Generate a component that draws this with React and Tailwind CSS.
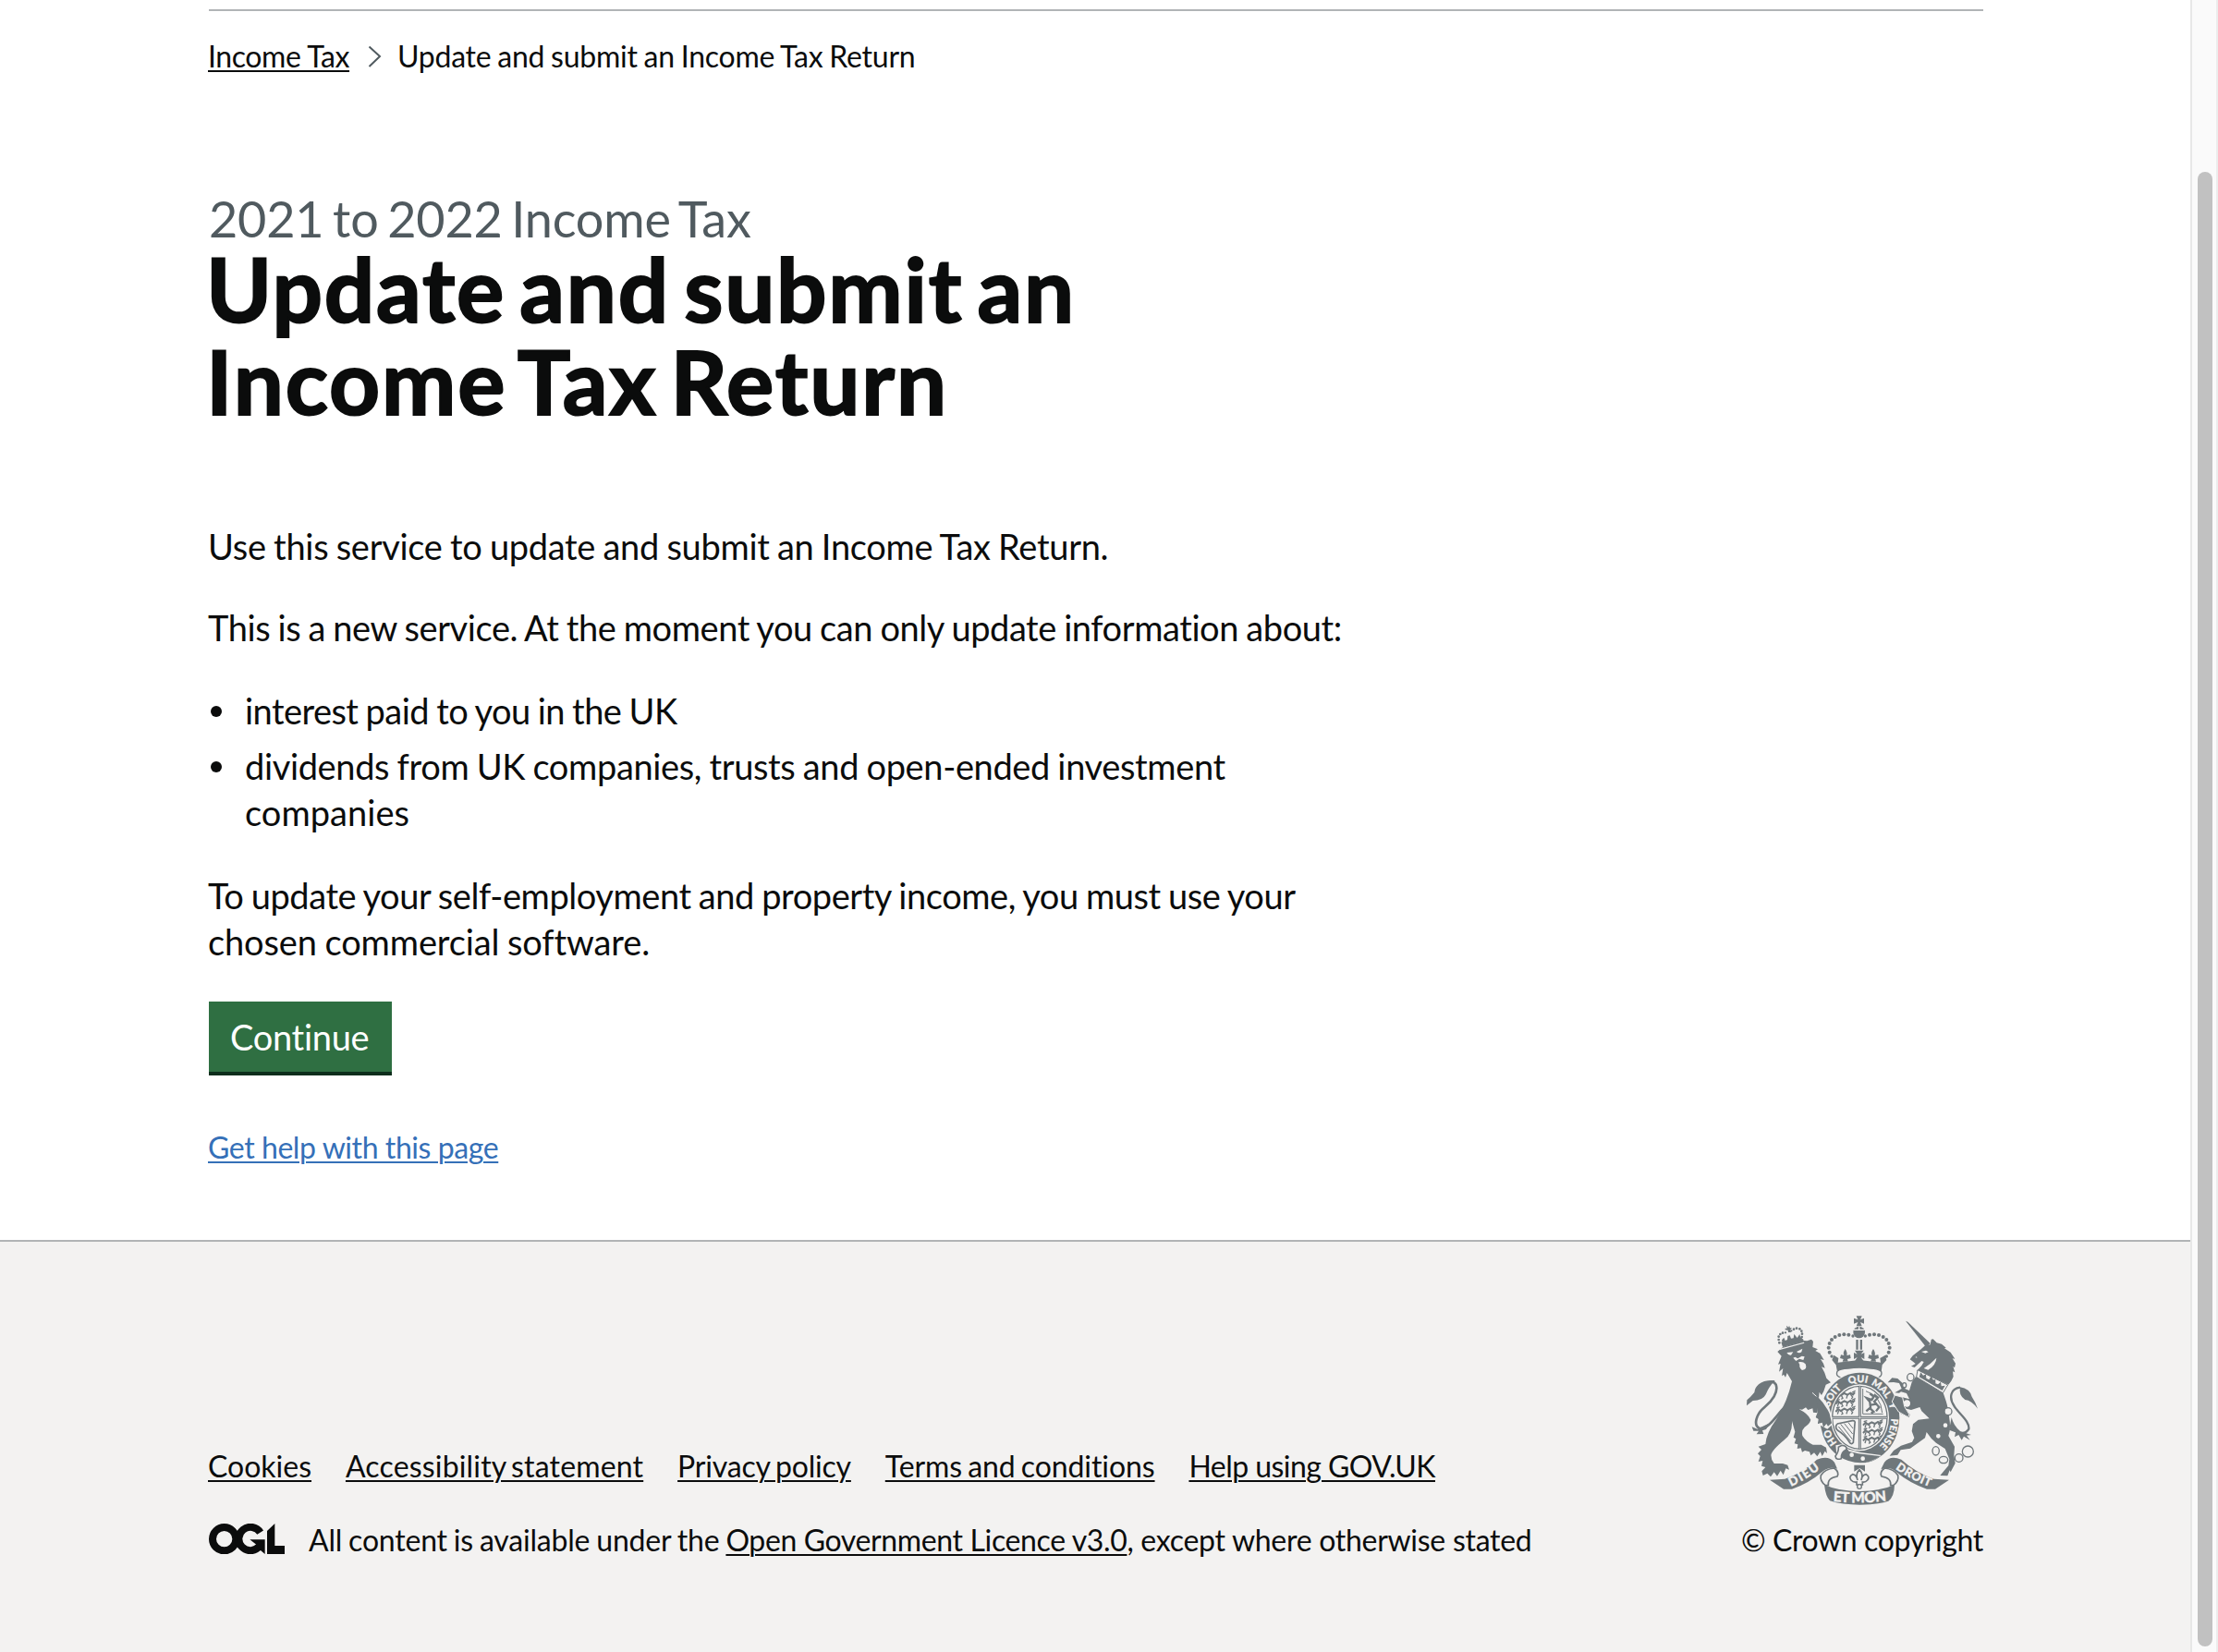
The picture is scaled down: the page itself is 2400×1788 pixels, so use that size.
import React from "react";

const footerLinks = [
  { label: "Cookies", className: "tracking-[0px]" },
  { label: "Accessibility statement", className: "tracking-[0.17px] [word-spacing:-3px]" },
  { label: "Privacy policy", className: "tracking-[-0.2px] [word-spacing:-2px]" },
  { label: "Terms and conditions", className: "tracking-[-0.08px] [word-spacing:-2px]" },
  { label: "Help using GOV.UK", className: "tracking-[-0.55px]" },
];

const link = "underline decoration-2 underline-offset-[3px]";

function OglLogo() {
  return (
    <svg className="block h-[33.4px] w-[82px] shrink-0" viewBox="18 25 246 100" role="img" aria-label="Open Government Licence">
      <circle cx="68" cy="75" r="38" fill="none" stroke="#0b0c0c" strokeWidth="24" />
      <path d="M185 54 A38 38 0 1 0 182 99" fill="none" stroke="#0b0c0c" strokeWidth="24" />
      <path d="M151 77 H200 V124 L185 111 L172 116 L164 98 L172 93 Z M207 49 L232 25 V97 H264 V125 H207 Z" fill="#0b0c0c" />
      <path d="M105 57 L114 75 L105 93 Z" fill="#0b0c0c" />
    </svg>
  );
}

const crownDots = [
  [405, 106, 5], [391, 102, 6], [376, 101, 6], [361, 103, 6], [347, 109, 6], [336, 118, 6],
  [329, 130, 6], [326, 144, 6], [329, 159, 6], [336, 172, 5],
];
const smallCrownDots = [
  [166, 128, 4], [164, 118, 4], [164, 108, 4], [169, 100, 4], [177, 96, 4], [186, 95, 3.5],
  [205, 89, 3.5], [213, 84, 4], [222, 81, 4], [232, 83, 4], [238, 90, 4], [240, 99, 4], [239, 109, 4],
];
const charges = [
  [347, 288], [347, 313], [347, 338], [436, 382], [436, 407], [436, 432],
];

function RoyalArms() {
  const g = "#6f777b";
  const bg = "#f3f2f1";
  return (
    <svg className="block h-[206.7px] w-[250px]" viewBox="60 40 750 620" role="img" aria-label="Royal coat of arms">
      <defs>
        <path id="garter" d="M427 488 A102 116 0 0 1 427 256 A102 116 0 0 1 427 488" />
        <path id="dieu" d="M196 598 Q250 575 305 532" />
        <path id="droit" d="M536 532 Q590 572 662 598" />
        <path id="mon" d="M330 642 Q427 652 524 640" />
        <clipPath id="field"><ellipse cx="427" cy="371" rx="89" ry="102" /></clipPath>
      </defs>

      {/* lion */}
      <g fill={g}>
        <path d="M160 157 L178 141 L246 121 L256 122 L270 117 L276 124 L274 142 L291 149 L283 154 L298 162 L311 184 L300 181 L309 195 L314 210 L303 206 L313 225 L319 243 L333 257 L317 264 L310 285 L300 303 L322 337 L334 370 L333 390 L322 404 L318 391 L309 402 L304 386 L292 391 L292 376 L285 370 L291 356 L276 354 L274 341 L259 346 L252 338 L240 345 L230 344 Q259 358 268 378 Q265 391 248 402 Q237 412 241 430 Q253 449 275 459 L302 459 L318 468 L321 487 L314 480 L305 496 L299 482 L289 497 L279 485 L268 494 L264 482 L249 478 L240 483 L236 470 L224 472 L226 458 L215 455 L220 440 L212 435 L217 417 L207 382 Q209 425 181 444 Q140 478 139 493 Q139 507 149 520 L177 520 L193 525 L198 540 L187 536 L179 557 L170 543 L159 561 L149 548 L138 563 L127 552 L113 559 L109 545 L121 532 L108 528 L112 511 L98 514 L104 496 L96 488 L108 475 L98 465 L121 457 Q124 420 155 378 Q184 332 198 286 L207 253 L191 226 L186 240 L180 231 L174 236 L178 211 L165 222 L170 196 L162 198 L173 171 Z" />
        <path d="M77 401 L95 408 L111 400 L137 387 L123 409 L111 413 L115 424 L92 425 L99 414 L82 414 Z" />
        <path d="M152 250 Q115 248 99 263 Q86 274 85 289 Q73 304 61 314 L60 332 L80 316 Q112 316 122 296 Q131 272 152 250 Z" />
        <path d="M172 126 L236 110 L245 119 L242 124 L177 142 Z" />
        {smallCrownDots.map(([x, y, r], i) => <circle key={i} cx={x} cy={y} r={r} />)}
        <path d="M189 72 L196 78 L198 72 L201 80 L207 80 L202 86 L204 94 L195 94 L194 87 L185 86 L185 81 L191 81 Z" />
        <path d="M176 128 L174 119 L181 111 L185 121 L192 118 L193 106 L200 104 L204 114 L212 113 L214 100 L221 108 L224 112 L232 100 L235 112 L180 126 Z" />
      </g>
      <path d="M190 330 C160 356 134 410 101 406 C80 394 92 358 119 336 C142 317 164 288 155 264 Q148 251 133 256" fill="none" stroke={g} strokeWidth="8" />
      <path d="M190 160 L211 158 L204 168 Q196 170 190 160 Z M222 157 L241 147 L238 158 Q230 164 222 157 Z M228 191 Q242 187 251 197 Q258 215 240 217 Q230 210 232 199 Z M211 177 L217 174 L226 179 L239 171 L248 173 L244 184 L231 180 L220 187 Z M167 147 L246 126 L247 129 L168 151 Z" fill={bg} />
      <path d="M273 290 Q302 312 326 346" fill="none" stroke={bg} strokeWidth="3" />

      {/* unicorn */}
      <g fill={g}>
        <path d="M576 57 L583 60 L656 130 L643 143 Z" />
        <path d="M590 182 L599 170 L626 149 L639 137 L656 134 L659 117 L665 116 L677 128 L693 132 L707 144 L702 146 L722 159 L736 180 L728 179 L738 195 L735 209 L730 204 L736 224 L729 221 L731 238 L724 252 L715 264 L612 219 L628 202 L635 190 L628 187 L614 200 L605 208 L594 204 L608 196 L601 190 Z" />
        <path d="M609 238 L696 286 Q715 334 717 367 Q724 407 715 430 L735 465 L733 493 L737 519 L722 548 L719 542 L712 560 L688 559 L701 543 L715 527 L718 506 L704 472 L675 453 L659 438 L644 418 L639 437 L591 471 L560 476 L550 492 L524 495 L537 478 L561 462 L597 450 L604 437 L596 415 L600 392 L617 378 L653 374 L628 350 L622 337 L594 346 L570 340 L568 330 L590 361 L587 370 L560 358 L545 349 L532 319 L541 301 L566 305 L588 311 L579 292 L561 287 L555 291 L541 290 L563 277 L555 259 L537 256 L518 257 L532 242 L550 244 L566 259 L575 278 L588 283 L596 256 Z" />
        <path d="M810 342 Q802 319 791 303 Q784 277 753 272 Q747 299 769 313 Q790 315 810 342 Z" />
        <path d="M725 370 Q731 397 754 416 L789 427 L774 429 L785 444 L765 432 L758 444 L748 427 L735 434 L738 419 L717 411 Z" />
      </g>
      <path d="M721 398 C732 415 766 434 781 408 C784 382 751 361 734 334 C715 306 722 276 753 273" fill="none" stroke={g} strokeWidth="7" />
      <path d="M615 216 L713 265 L697 291 L611 239 Z" fill={bg} stroke={g} strokeWidth="3" />
      <path d="M620 239 L625 224 L633 234 L642 230 L643 243 L652 248 L659 235 L665 248 L673 248 L673 260 L681 263 L690 255 L692 269 L704 267 L695 283 Z" fill={g} />
      <path d="M627 157 L642 153 L650 158 L640 162 Z M607 175 L612 173 L613 177 Z M635 211 Q656 198 676 177 Q675 200 649 216 Z" fill={bg} />
      <g fill={bg} stroke={g} strokeWidth="4">
        <ellipse cx="592" cy="240" rx="11" ry="12" />
        <ellipse cx="572" cy="266" rx="6" ry="8" />
        <ellipse cx="580" cy="325" rx="13" ry="13" />
        <ellipse cx="714" cy="351" rx="12" ry="12" />
        <ellipse cx="705" cy="396" rx="9" ry="9" />
        <ellipse cx="682" cy="431" rx="9" ry="9" />
        <g fill="none">
          <ellipse cx="674" cy="479" rx="11" ry="14" />
          <ellipse cx="699" cy="508" rx="14" ry="11" />
          <ellipse cx="749" cy="502" rx="13" ry="13" />
          <ellipse cx="778" cy="481" rx="18" ry="18" />
        </g>
      </g>

      {/* crown */}
      <g fill={g}>
        <path d="M416 41 H434 L429 53 L441 48 V66 L429 61 L434 74 H416 L421 61 L408 66 V48 L421 53 Z" />
        <circle cx="425" cy="94" r="19" />
        <path d="M415 118 H422 V150 H415 Z M428 118 H435 V150 H428 Z" />
        {crownDots.map(([x, y, r], i) => (
          <g key={i}><circle cx={x} cy={y} r={r} /><circle cx={850 - x} cy={y} r={r} /></g>
        ))}
        <path d="M411 153 H440 L431 165 L442 160 V181 L431 175 L440 188 H411 L419 175 L408 181 V160 L419 165 Z" />
        <path d="M380 148 Q388 160 385 169 L396 167 L398 178 L387 181 L389 189 H371 L374 181 L363 178 L366 167 L376 169 Q371 160 380 148 Z" />
        <path d="M471 148 Q479 160 476 169 L487 167 L489 178 L478 181 L480 189 H462 L465 181 L454 178 L457 167 L467 169 Q462 160 471 148 Z" />
        <path d="M343 168 L358 178 L356 192 L425 184 L495 192 L493 178 L510 168 L514 184 L500 200 L497 222 Q425 201 354 222 L350 200 L337 184 Z" />
      </g>
      <path d="M407 86 H443 M425 76 V84" fill="none" stroke={bg} strokeWidth="4" />
      <path d="M366 241 Q348 237 354 221 Q362 212 390 211 Q425 206 462 211 Q492 213 497 222 Q501 238 484 241" fill={bg} stroke={g} strokeWidth="4" />

      {/* garter */}
      <ellipse cx="427" cy="372" rx="133" ry="150" fill={bg} />
      <ellipse cx="427" cy="372" rx="129" ry="147" fill={g} />
      <ellipse cx="427" cy="371" rx="95" ry="108" fill={bg} />
      <ellipse cx="427" cy="371" rx="89" ry="102" fill="none" stroke={g} strokeWidth="4" />
      <g fill={bg} stroke={bg} strokeWidth="0.8" fontFamily="Lato, sans-serif" fontWeight="900" fontSize="32" textAnchor="middle">
        <text><textPath href="#garter" startOffset="16%">HO</textPath></text>
        <text><textPath href="#garter" startOffset="35.5%">SOIT</textPath></text>
        <text><textPath href="#garter" startOffset="49.2%">QUI</textPath></text>
        <text><textPath href="#garter" startOffset="60.5%">MAL</textPath></text>
        <text><textPath href="#garter" startOffset="69.5%">Y</textPath></text>
        <text><textPath href="#garter" startOffset="82.5%">PENSE</textPath></text>
      </g>

      {/* quartered field */}
      <g clipPath="url(#field)" fill="none" stroke={g}>
        {charges.map(([x, y], i) => (
          <g key={i} transform={`translate(${x} ${y})`}>
            <path d="M2 14 L10 5 L18 11 L30 4 L40 9 L50 3 L58 8 L64 1" strokeWidth="6" />
            <path d="M12 9 L8 22 M20 10 L25 20 L20 23 M40 9 L37 21 M50 7 L57 16 L53 22 M4 2 L15 -1 M55 1 L66 -4" strokeWidth="4" />
          </g>
        ))}
        <path d="M437 277 V359 H503 M447 285 Q495 300 500 355" strokeWidth="3" />
        <path d="M448 350 L462 338 L460 320 L449 307 L466 313 L476 298 L486 306 L474 319 L490 337 L480 350 M463 330 L483 326 M461 341 L472 352 L464 356 M474 304 L460 293" strokeWidth="7" />
        <path d="M354 391 L403 381 Q414 380 411 391 L406 452 Q399 461 392 448 Q379 427 355 412 Q345 402 354 391" strokeWidth="5" />
        <path d="M365 392 L403 441 M377 390 L404 424 M390 387 L405 406 M358 400 L398 448" strokeWidth="3" />
        <path d="M427 262 V482 M332 371 H522" strokeWidth="9" />
        <path d="M427 262 V482 M332 371 H522" stroke={bg} strokeWidth="2" />
      </g>

      {/* lion's paw over the garter */}
      <path d="M296 288 L326 332 L338 372 L337 394 L322 408 L301 397 L286 376 L290 350 Z" fill={bg} />
      <path d="M286 298 Q316 328 329 358 L336 389 L324 399 L319 391 L309 403 L305 387 L291 391 L293 376 L284 370 L290 354 Z" fill={g} />
      {/* hooves over the garter */}
      <path d="M541 298 L566 305 L572 335 L588 361 L583 369 L553 352 L532 319 Z" fill={g} stroke={bg} strokeWidth="3" />
      {/* buckle and strap */}
      <path d="M349 461 L371 457 L391 474 L430 484 L497 493 Q459 520 427 521 Q389 521 353 501 Z" fill={bg} />
      <path d="M363 464 L382 466 L392 480 L423 488 L493 496 Q462 518 430 518 Q390 517 360 497 L371 484 Z" fill={g} />
      <path d="M369 461 Q386 462 384 474 Q365 483 367 504 Q350 510 348 496 Q359 482 358 467 Z" fill={bg} stroke={g} strokeWidth="5" />
      <circle cx="401" cy="492" r="7" fill={bg} />
      <circle cx="437" cy="504" r="7" fill={bg} />

      {/* fleur */}
      <path d="M409 525 H444 V546 L427 535 L409 546 Z" fill={g} />
      <path d="M426 540 Q440 555 432 574 Q434 557 448 555 Q461 563 452 574 Q445 582 436 580 V589 H417 V580 Q406 582 399 574 Q390 562 404 555 Q417 557 420 574 Q412 555 426 540 Z" fill={bg} stroke={g} strokeWidth="5" />
      <circle cx="426" cy="595" r="7" fill={bg} stroke={g} strokeWidth="4" />

      {/* motto ribbon */}
      <path d="M135 573 L184 570 Q245 549 288 507 Q326 492 345 516 L354 537 Q328 528 308 545 Q260 586 207 603 H180 Z" fill={g} />
      <path d="M717 573 L668 570 Q608 549 562 507 Q526 492 507 516 L496 539 Q523 529 542 545 Q592 586 645 603 H672 Z" fill={g} />
      <g fill={bg} stroke={g} strokeWidth="5">
        <path d="M316 591 Q297 578 301 558 Q314 538 344 535 Q362 548 354 562 Q321 567 325 591 Z" />
        <path d="M536 591 Q555 578 551 558 Q538 538 508 535 Q490 548 498 562 Q531 567 527 591 Z" />
      </g>
      <path d="M312 589 Q358 610 427 610 Q497 609 540 589 Q539 628 520 642 Q482 654 427 654 Q369 654 330 641 Q316 626 312 589 Z" fill={g} />
      <g fill={bg} stroke={bg} strokeWidth="1" fontFamily="Lato, sans-serif" fontWeight="900" textAnchor="middle">
        <text fontSize="40"><textPath href="#dieu" startOffset="50%" textLength="110">DIEU</textPath></text>
        <text fontSize="38"><textPath href="#droit" startOffset="50%" textLength="126">DROIT</textPath></text>
        <text fontSize="46"><textPath href="#mon" startOffset="50%" textLength="174">ET MON</textPath></text>
      </g>
    </svg>
  );
}

export default function App() {
  return (
    <div className="flex h-[1788px] w-[2400px] overflow-hidden bg-white font-['Lato',sans-serif] text-[#0b0c0c] [font-variant-ligatures:none]">
      <div className="flex w-[2370px] flex-col">
        <div className="ml-[226px] w-[1920px] pt-[10px]">
          <div className="h-0.5 bg-[#b1b4b6]" />
          <nav className="mt-[29px] flex h-10 items-center text-[32px] leading-10 whitespace-nowrap">
            <a className={`${link} -ml-px w-[153px] tracking-[-0.42px]`}>Income Tax</a>
            <svg className="ml-5 h-6 w-[15px]" viewBox="0 0 15 24" fill="none">
              <path d="M1.5 1.5 L13 12 L1.5 23" stroke="#505a5f" strokeWidth="2" />
            </svg>
            <span className="ml-[17px] tracking-[-0.26px] [word-spacing:-1px]">Update and submit an Income Tax Return</span>
          </nav>

          <main className="pt-[130px]">
            <h1>
              <span className="block text-[54px] leading-[51px] tracking-[-0.2px] [word-spacing:-4px] text-[#505a5f]">2021 to 2022 Income Tax</span>
              <span className="-ml-[3px] block text-[96px] leading-[100px] font-bold whitespace-nowrap [-webkit-text-stroke:2px_#0b0c0c]">
                <span className="block tracking-[1.8px] [word-spacing:-10px]">Update and submit an</span>
                <span className="block tracking-[1.9px] [word-spacing:-11px]">Income Tax Return</span>
              </span>
            </h1>

            <div className="-ml-px pt-[103.5px] text-[38px] leading-[50px] whitespace-nowrap">
              <p className="tracking-[-0.3px] [word-spacing:-1px]">Use this service to update and submit an Income Tax Return.</p>
              <p className="mt-[38px] tracking-[-0.42px] [word-spacing:-1px]">This is a new service. At the moment you can only update information about:</p>
              <ul className="mt-10">
                <li className="flex tracking-[-0.55px] [word-spacing:-1px]">
                  <span className="mt-[20px] mr-[25px] ml-[3px] size-3 rounded-full bg-[#0b0c0c]" />
                  interest paid to you in the UK
                </li>
                <li className="mt-2.5 flex tracking-[-0.36px] [word-spacing:-1px]">
                  <span className="mt-[20px] mr-[25px] ml-[3px] size-3 rounded-full bg-[#0b0c0c]" />
                  <span>dividends from UK companies, trusts and open-ended investment<br /><span className="tracking-[0.04px]">companies</span></span>
                </li>
              </ul>
              <p className="mt-10 tracking-[-0.44px] [word-spacing:-1px]">
                To update your self-employment and property income, you must use your<br />
                <span className="tracking-[-0.12px]">chosen commercial software.</span>
              </p>
            </div>

            <button className="mt-[40.5px] block h-20 w-[198px] border-b-4 border-[#0d2e1c] bg-[#2f6f42] px-[23px] pt-[13px] pb-[13px] text-left text-[38px] leading-[50px] tracking-[-0.3px] whitespace-nowrap text-white">Continue</button>

            <a className={`${link} mt-[58px] -ml-px block w-fit text-[32px] leading-10 tracking-[-0.42px] text-[#3570b8]`}>Get help with this page</a>
          </main>
        </div>

        <footer className="mt-[80px] h-[446px] shrink-0 border-t-2 border-[#b1b4b6] bg-[#f3f2f1] pl-[225px] text-[32px] leading-10">
          <div className="flex h-[342.6px] w-[1921px] items-end justify-between whitespace-nowrap">
            <div>
              <ul className="flex gap-[36.9px]">
                {footerLinks.map((item) => (
                  <li key={item.label}><a className={`${link} ${item.className}`}>{item.label}</a></li>
                ))}
              </ul>
              <div className="mt-10 flex">
                <div className="mt-0.5 mr-[26px] ml-px"><OglLogo /></div>
                <p>
                  <span className="tracking-[-0.2px] [word-spacing:-1px]">All content is available under the </span>
                  <a className={`${link} tracking-[-0.37px]`}>Open Government Licence v3.0</a>
                  <span className="tracking-[-0.28px]">, except where otherwise stated</span>
                </p>
              </div>
            </div>
            <div className="flex w-[262px] flex-col">
              <div className="ml-1.5"><RoyalArms /></div>
              <p className="mt-[15.5px] tracking-[-0.38px]">© Crown copyright</p>
            </div>
          </div>
        </footer>
      </div>

      <div className="w-[30px] border-r-2 border-l-2 border-r-[#ececec] border-l-[#e7e7e7] bg-[#fafafa] pt-[186px] pl-1.5">
        <div className="h-[1596px] w-4 rounded-full bg-[#c1c1c1]" />
      </div>
    </div>
  );
}
